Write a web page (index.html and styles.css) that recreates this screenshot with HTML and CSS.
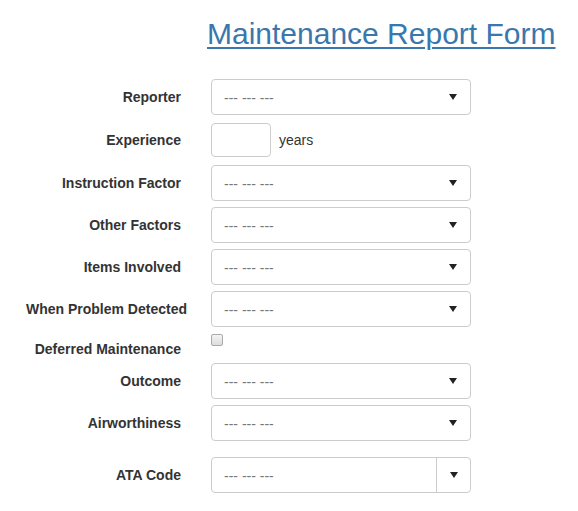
FILE: index.html
```html
<!DOCTYPE html>
<html lang="en">
<head>
    <meta charset="UTF-8">
    <meta name="viewport" content="width=device-width, initial-scale=1.0">
    <title>Maintenance Report Form</title>
    <link rel="stylesheet" href="styles.css">
</head>
<body>
    <div class="page">
        <!-- Title -->
        <h1 class="title"><a href="#">Maintenance Report Form</a></h1>

        <form class="report-form">
            <div class="row">
                <label>Reporter</label>
                <div class="select">
                    <span>--- --- ---</span>
                    <svg width="8" height="6" viewBox="0 0 8 6"><path d="M0 0H8L4 6Z" fill="#222"/></svg>
                </div>
            </div>

            <div class="row row-experience">
                <label>Experience</label>
                <input type="text" class="years-input">
                <span class="unit">years</span>
            </div>

            <div class="row">
                <label>Instruction Factor</label>
                <div class="select">
                    <span>--- --- ---</span>
                    <svg width="8" height="6" viewBox="0 0 8 6"><path d="M0 0H8L4 6Z" fill="#222"/></svg>
                </div>
            </div>

            <div class="row">
                <label>Other Factors</label>
                <div class="select">
                    <span>--- --- ---</span>
                    <svg width="8" height="6" viewBox="0 0 8 6"><path d="M0 0H8L4 6Z" fill="#222"/></svg>
                </div>
            </div>

            <div class="row">
                <label>Items Involved</label>
                <div class="select">
                    <span>--- --- ---</span>
                    <svg width="8" height="6" viewBox="0 0 8 6"><path d="M0 0H8L4 6Z" fill="#222"/></svg>
                </div>
            </div>

            <div class="row">
                <label class="label-long">When Problem Detected</label>
                <div class="select">
                    <span>--- --- ---</span>
                    <svg width="8" height="6" viewBox="0 0 8 6"><path d="M0 0H8L4 6Z" fill="#222"/></svg>
                </div>
            </div>

            <div class="row row-check">
                <label>Deferred Maintenance</label>
                <span class="checkbox"></span>
            </div>

            <div class="row">
                <label>Outcome</label>
                <div class="select">
                    <span>--- --- ---</span>
                    <svg width="8" height="6" viewBox="0 0 8 6"><path d="M0 0H8L4 6Z" fill="#222"/></svg>
                </div>
            </div>

            <div class="row row-air">
                <label>Airworthiness</label>
                <div class="select">
                    <span>--- --- ---</span>
                    <svg width="8" height="6" viewBox="0 0 8 6"><path d="M0 0H8L4 6Z" fill="#222"/></svg>
                </div>
            </div>

            <div class="row">
                <label>ATA Code</label>
                <div class="select select-split">
                    <span>--- --- ---</span>
                    <div class="split-btn">
                        <svg width="8" height="6" viewBox="0 0 8 6"><path d="M0 0H8L4 6Z" fill="#222"/></svg>
                    </div>
                </div>
            </div>
        </form>
    </div>
</body>
</html>
```

FILE: styles.css
```css
* {
    margin: 0;
    padding: 0;
    box-sizing: border-box;
}

body {
    font-family: "Liberation Sans", Arial, sans-serif;
    font-size: 14px;
    color: #333;
    background-color: #fff;
}

.page {
    width: 578px;
    padding-top: 17px;
}

.title {
    margin-left: 207px;
    font-size: 30px;
    line-height: 34px;
    font-weight: normal;
    white-space: nowrap;
    margin-bottom: 28px;
}

.title a {
    color: #3a77ad;
    text-decoration: underline;
    text-underline-offset: 3px;
    text-decoration-thickness: 2px;
}

.report-form {
    display: flex;
    flex-direction: column;
}

.row {
    display: flex;
    align-items: center;
    margin-bottom: 6px;
}

.row label {
    width: 181px;
    text-align: right;
    font-weight: bold;
    margin-right: 30px;
    line-height: 20px;
    white-space: nowrap;
}

.row .label-long {
    width: 187px;
    margin-right: 24px;
}

.select {
    width: 260px;
    height: 36px;
    border: 1px solid #ccc;
    border-radius: 4px;
    display: flex;
    align-items: center;
    justify-content: space-between;
    padding: 0 13px 0 12px;
    color: #777;
    font-size: 14px;
}

.select span {
    padding-top: 1px;
}

.row:first-child {
    margin-bottom: 8px;
}

.row-experience {
    margin-bottom: 8px;
}

.years-input {
    width: 60px;
    height: 34px;
    border: 1px solid #ccc;
    border-radius: 4px;
}

.unit {
    margin-left: 8px;
    font-size: 14px;
}

.row-check {
    align-items: flex-start;
    height: 24px;
}

.row-check label {
    padding-top: 6px;
}

.checkbox {
    width: 12px;
    height: 12px;
    margin-top: 1px;
    border: 1px solid #aaa;
    border-radius: 2px;
    background: linear-gradient(#f4f4f4, #dcdcdc);
}

.row-air {
    margin-bottom: 16px;
}

.select-split {
    padding-right: 0;
}

.split-btn {
    width: 34px;
    height: 100%;
    border-left: 1px solid #ccc;
    display: flex;
    align-items: center;
    justify-content: center;
}
```
